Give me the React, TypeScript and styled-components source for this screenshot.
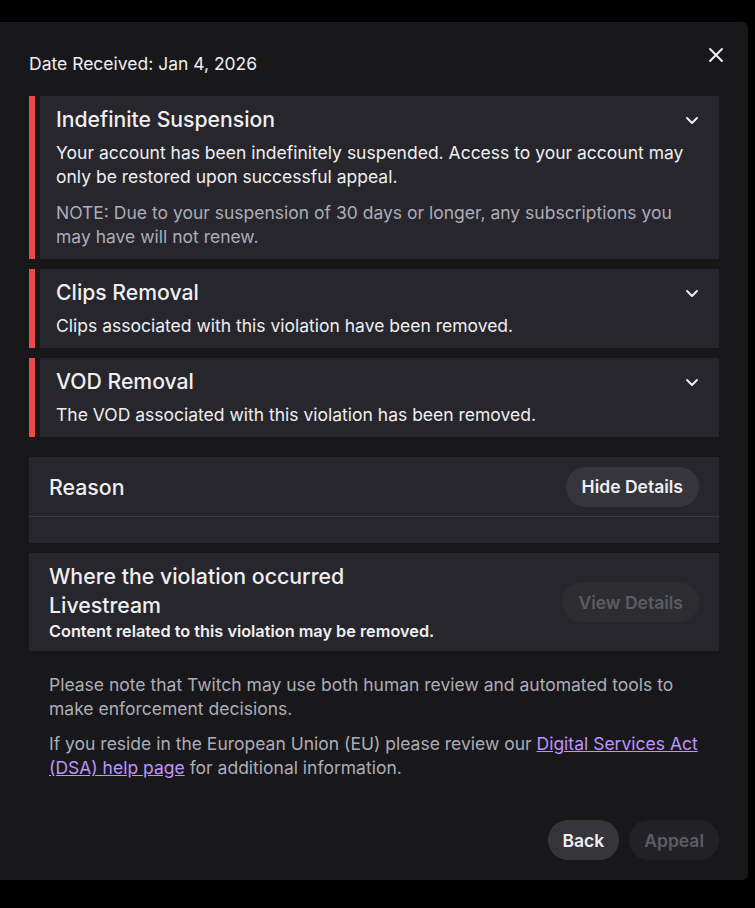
import React from "react"
import styled, { createGlobalStyle } from "styled-components"

const GlobalStyle = createGlobalStyle`
  html, body {
    margin: 0;
    padding: 0;
    background: #000000;
  }
  body {
    font-family: Inter, "Noto Sans", "Liberation Sans", sans-serif;
    color: #efeff1;
  }
`

type Violation = {
  title: string
  body: string
  note?: string
}

const violations: Violation[] = [
  {
    title: "Indefinite Suspension",
    body: "Your account has been indefinitely suspended. Access to your account may only be restored upon successful appeal.",
    note: "NOTE: Due to your suspension of 30 days or longer, any subscriptions you may have will not renew.",
  },
  {
    title: "Clips Removal",
    body: "Clips associated with this violation have been removed.",
  },
  {
    title: "VOD Removal",
    body: "The VOD associated with this violation has been removed.",
  },
]

const Chevron = () => (
  <svg width="20" height="20" viewBox="0 0 20 20" fill="none">
    <path d="M5 8l5 5 5-5" stroke="#efeff1" strokeWidth="2" strokeLinecap="round" strokeLinejoin="round" />
  </svg>
)

const CloseIcon = () => (
  <svg width="20" height="20" viewBox="0 0 20 20" fill="none">
    <path d="M4 4l12 12M16 4L4 16" stroke="#efeff1" strokeWidth="2" strokeLinecap="round" />
  </svg>
)

const App = () => {
  return (
    <>
      <GlobalStyle />
      <Modal>
        <CloseButton aria-label="Close">
          <CloseIcon />
        </CloseButton>
        <DateLine>Date Received: Jan 4, 2026</DateLine>
        <Stack>
          {violations.map((v) => (
            <ViolationRow key={v.title}>
              <RedBar />
              <ViolationCard>
                <CardHead>
                  <CardTitle>{v.title}</CardTitle>
                  <Toggle>
                    <Chevron />
                  </Toggle>
                </CardHead>
                <CardBody>{v.body}</CardBody>
                {v.note && <CardNote>{v.note}</CardNote>}
              </ViolationCard>
            </ViolationRow>
          ))}
        </Stack>

        <ReasonCard>
          <ReasonHead>
            <SectionTitle>Reason</SectionTitle>
            <PillButton>Hide Details</PillButton>
          </ReasonHead>
          <ReasonBody />
        </ReasonCard>

        <WhereCard>
          <WhereText>
            <SectionTitle>Where the violation occurred</SectionTitle>
            <SectionTitle>Livestream</SectionTitle>
            <Small>Content related to this violation may be removed.</Small>
          </WhereText>
          <PillButton disabled>View Details</PillButton>
        </WhereCard>

        <Footer>
          <Para>Please note that Twitch may use both human review and automated tools to make enforcement decisions.</Para>
          <Para>
            If you reside in the European Union (EU) please review our{" "}
            <Link href="#">Digital Services Act (DSA) help page</Link> for additional information.
          </Para>
        </Footer>

        <Actions>
          <PillButton $compact>Back</PillButton>
          <PillButton disabled $muted $compact>
            Appeal
          </PillButton>
        </Actions>
      </Modal>
    </>
  )
}

export default App

const Modal = styled.div`
  position: relative;
  box-sizing: border-box;
  width: 748px;
  margin-top: 22px;
  padding: 30px 29px 20px 29px;
  background: #18181b;
  border-radius: 0 6px 6px 0;
  display: flex;
  flex-direction: column;
`

const CloseButton = styled.button`
  position: absolute;
  top: 18px;
  right: 17px;
  width: 30px;
  height: 30px;
  padding: 0;
  border: none;
  background: transparent;
  display: flex;
  align-items: center;
  justify-content: center;
  cursor: pointer;
`

const DateLine = styled.div`
  font-size: 17.5px;
  line-height: 24px;
  color: #efeff1;
`

const Stack = styled.div`
  margin-top: 20px;
  display: flex;
  flex-direction: column;
  gap: 10px;
`

const ViolationRow = styled.div`
  display: flex;
  gap: 5px;
`

const RedBar = styled.div`
  width: 6px;
  flex-shrink: 0;
  background: #eb4a4a;
`

const ViolationCard = styled.div`
  flex: 1;
  background: #26262c;
  padding: 10px 20px 10px 16px;
`

const CardHead = styled.div`
  display: flex;
  align-items: center;
  justify-content: space-between;
`

const CardTitle = styled.div`
  font-size: 21.2px;
  line-height: 26px;
  font-weight: 500;
  color: #efeff1;
`

const Toggle = styled.div`
  width: 20px;
  height: 20px;
  display: flex;
  margin-right: -3px;
  margin-top: 2px;
`

const CardBody = styled.div`
  margin-top: 9px;
  font-size: 17.5px;
  line-height: 24px;
  color: #efeff1;
`

const CardNote = styled.div`
  margin-top: 12px;
  font-size: 17.5px;
  line-height: 24px;
  color: #adadb8;
`

const ReasonCard = styled.div`
  margin-top: 20px;
  background: #26262c;
  display: flex;
  flex-direction: column;
`

const ReasonHead = styled.div`
  height: 60px;
  box-sizing: border-box;
  padding: 0 20px;
  display: flex;
  align-items: center;
  justify-content: space-between;
  border-bottom: 1px solid #3a3a40;
`

const ReasonBody = styled.div`
  height: 26px;
`

const SectionTitle = styled.div`
  font-size: 21.3px;
  line-height: 26px;
  font-weight: 500;
  color: #efeff1;
`

const WhereCard = styled.div`
  margin-top: 10px;
  background: #26262c;
  padding: 10px 20px 10px 20px;
  display: flex;
  align-items: center;
  justify-content: space-between;
`

const WhereText = styled.div`
  display: flex;
  flex-direction: column;
  gap: 3px;
`

const Small = styled.div`
  font-size: 16.3px;
  line-height: 20px;
  font-weight: 600;
  color: #efeff1;
`

const PillButton = styled.button<{ $muted?: boolean; $compact?: boolean }>`
  height: 40px;
  padding: 0 ${(p) => (p.$compact ? "15px" : "16px")};
  border: none;
  border-radius: 20px;
  font-family: Inter, "Liberation Sans", sans-serif;
  font-size: 17.5px;
  font-weight: 600;
  color: #efeff1;
  background: #35353b;
  cursor: pointer;
  &:disabled {
    color: #5c5c64;
    background: ${(p) => (p.$muted ? "#222226" : "#2c2c31")};
    cursor: default;
  }
`

const Footer = styled.div`
  margin-top: 22px;
  padding: 0 20px;
  display: flex;
  flex-direction: column;
  gap: 11px;
`

const Para = styled.p`
  margin: 0;
  font-size: 17.5px;
  line-height: 24px;
  color: #adadb8;
`

const Link = styled.a`
  color: #bf94ff;
  text-decoration: underline;
`

const Actions = styled.div`
  margin-top: 40px;
  display: flex;
  justify-content: flex-end;
  gap: 10px;
`
